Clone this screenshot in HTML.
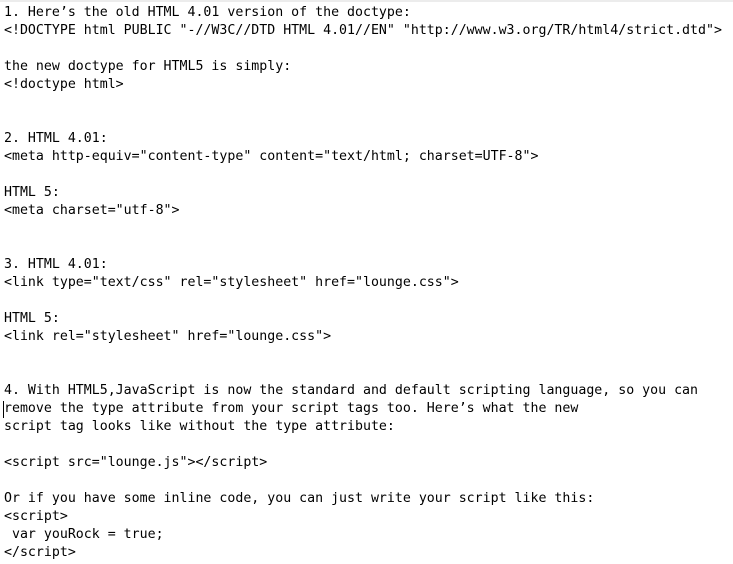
<!DOCTYPE html>
<html><head><style>
html,body{margin:0;padding:0;background:#fff;width:733px;height:564px;overflow:hidden}
body{border-top:2px solid #ececec;box-sizing:border-box}
pre{margin:0;padding:2px 0 0 4px;font-family:"DejaVu Sans Mono","Liberation Mono",monospace;font-size:13.25px;line-height:18px;color:#000;position:relative}
.cur{position:absolute;left:3px;top:399px;width:1px;height:17px;background:#000}
</style></head><body><pre>1. Here’s the old HTML 4.01 version of the doctype:
&lt;!DOCTYPE html PUBLIC "-//W3C//DTD HTML 4.01//EN" "http://www.w3.org/TR/html4/strict.dtd"&gt;

the new doctype for HTML5 is simply:
&lt;!doctype html&gt;


2. HTML 4.01:
&lt;meta http-equiv="content-type" content="text/html; charset=UTF-8"&gt;

HTML 5:
&lt;meta charset="utf-8"&gt;


3. HTML 4.01:
&lt;link type="text/css" rel="stylesheet" href="lounge.css"&gt;

HTML 5:
&lt;link rel="stylesheet" href="lounge.css"&gt;


4. With HTML5,JavaScript is now the standard and default scripting language, so you can
remove the type attribute from your script tags too. Here’s what the new
script tag looks like without the type attribute:

&lt;script src="lounge.js"&gt;&lt;/script&gt;

Or if you have some inline code, you can just write your script like this:
&lt;script&gt;
 var youRock = true;
&lt;/script&gt;<span class="cur"></span></pre></body></html>
